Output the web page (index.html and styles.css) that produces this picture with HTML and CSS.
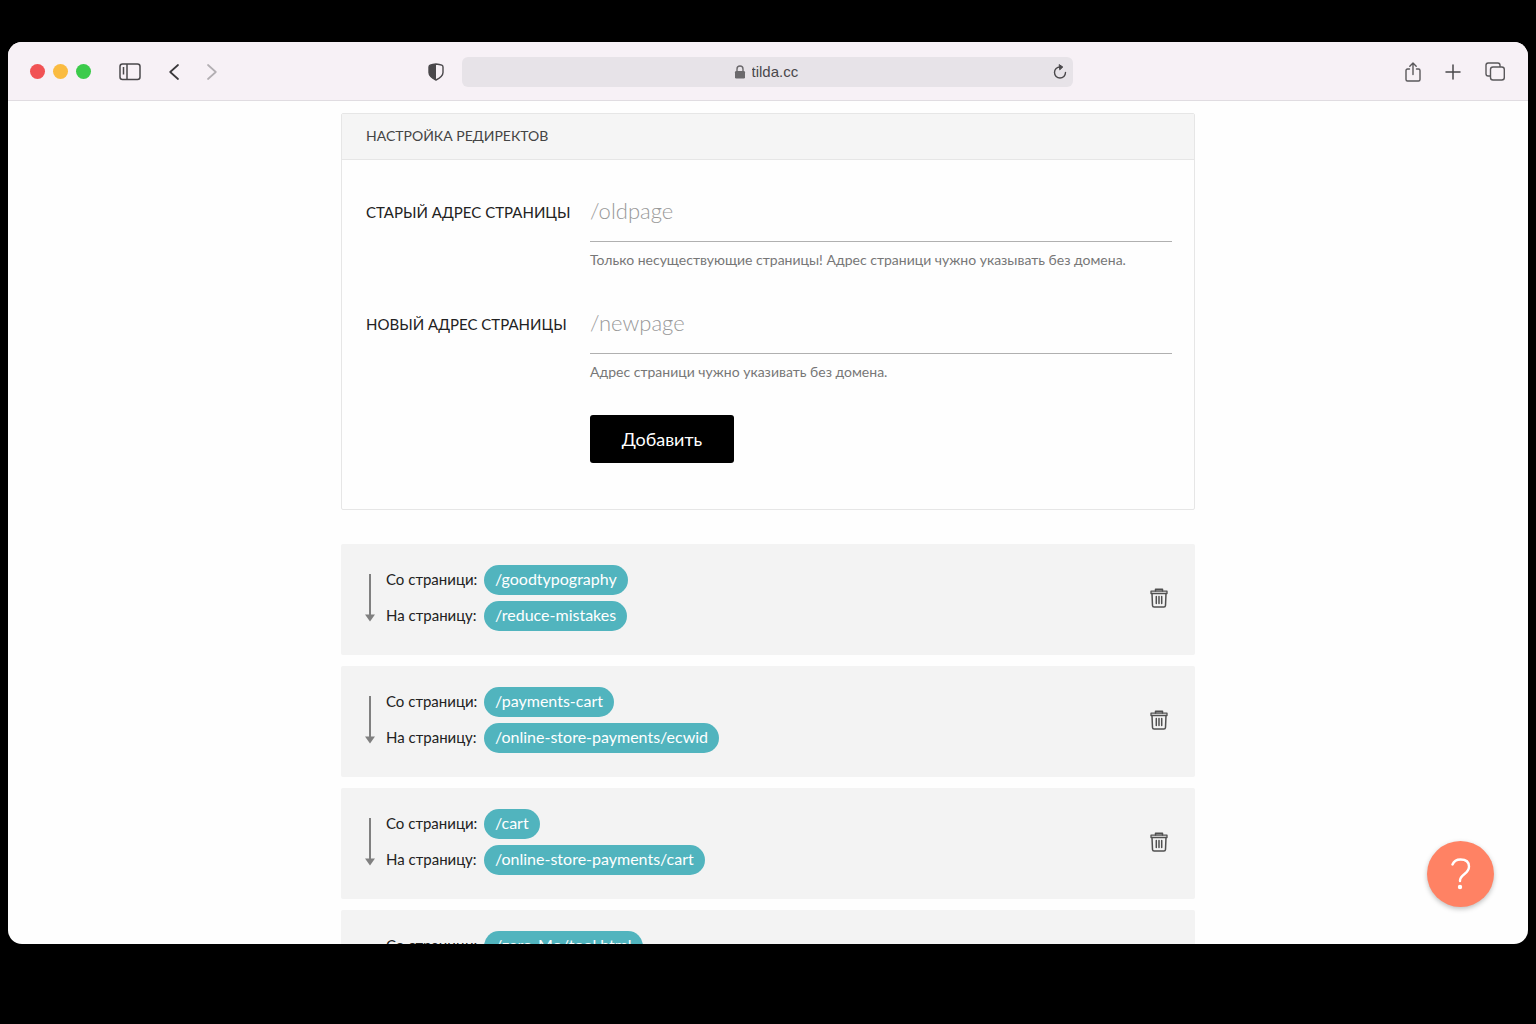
FILE: index.html
```html
<!DOCTYPE html>
<html lang="ru">
<head>
  <meta charset="UTF-8">
  <meta name="viewport" content="width=device-width, initial-scale=1.0">
  <title>Настройка редиректов</title>
  <link rel="stylesheet" href="styles.css">
</head>
<body>
  <svg class="sprite" width="0" height="0">
    <symbol id="icon-arrow" viewBox="0 0 10 48">
      <path d="M5 0V42" fill="none" stroke="#808080" stroke-width="2"/>
      <path d="M0 40.500H10L5 47.500Z" fill="#808080"/>
    </symbol>
    <symbol id="icon-trash" viewBox="0 0 18 20">
      <g fill="none" stroke="#505050" stroke-width="1.500" stroke-linejoin="round" stroke-linecap="round">
        <path d="M5.500 3V1.200H12.500V3" fill="#aaa"/>
        <path d="M1 3.200H17V5.500H1Z" stroke-width="1.300"/>
        <path d="M2 5.500L2.500 17.500Q2.600 19 4.100 19H13.900Q15.400 19 15.500 17.500L16 5.500"/>
        <path d="M6.300 8.500V15.500M9 8.500V15.500M11.700 8.500V15.500"/>
      </g>
    </symbol>
  </svg>

  <div class="window">
    <header class="toolbar">
      <div class="toolbar-left">
        <div class="dots">
          <span class="dot dot-red"></span>
          <span class="dot dot-yellow"></span>
          <span class="dot dot-green"></span>
        </div>
        <button class="tool" aria-label="Боковая панель">
          <svg width="22" height="18" viewBox="0 0 22 18" fill="none" stroke="#4a484b" stroke-width="1.500">
            <rect x="1" y="1" width="20" height="15.500" rx="2.500"/>
            <path d="M8 1V16.500M4.500 4V11.500"/>
          </svg>
        </button>
        <div class="nav">
          <button class="tool" aria-label="Назад">
            <svg width="10" height="16" viewBox="0 0 10 16" fill="none" stroke="#3a383b" stroke-width="1.700" stroke-linecap="round" stroke-linejoin="round"><path d="M9 1L1.200 8L9 15"/></svg>
          </button>
          <button class="tool" aria-label="Вперёд">
            <svg width="10" height="16" viewBox="0 0 10 16" fill="none" stroke="#b3afb3" stroke-width="1.700" stroke-linecap="round" stroke-linejoin="round"><path d="M1 1L8.800 8L1 15"/></svg>
          </button>
        </div>
        <button class="tool shield" aria-label="Конфиденциальность">
          <svg width="16" height="18" viewBox="0 0 16 18">
            <path d="M8 1Q4.500 1.200 2.200 2.200Q1 2.800 1 4V9.500Q1 13.500 8 17Q15 13.500 15 9.500V4Q15 2.800 13.800 2.200Q11.500 1.200 8 1Z" fill="none" stroke="#4a484b" stroke-width="1.400"/>
            <path d="M8 1Q4.500 1.200 2.200 2.200Q1 2.800 1 4V9.500Q1 13.500 8 17Z" fill="#4a484b"/>
          </svg>
        </button>
      </div>

      <div class="address">
        <svg class="lock" width="12" height="14" viewBox="0 0 12 14">
          <rect x="1" y="6" width="10" height="7.500" rx="1.200" fill="#6b696c"/>
          <path d="M3 6.500V4Q3 1 6 1T9 4V6.500" fill="none" stroke="#6b696c" stroke-width="1.400"/>
        </svg>
        <input class="address-input" type="text" value="tilda.cc" aria-label="Адрес сайта">
        <button class="tool reload" aria-label="Обновить">
          <svg width="14" height="15" viewBox="0 0 14 15" fill="none" stroke="#4a484b" stroke-width="1.400" stroke-linecap="round">
            <path d="M8 3H7A5.500 5.500 0 1 0 12.500 8.500"/>
            <path d="M6.500 0.800L9.800 3L7 5.600Z" fill="#4a484b" stroke-width="1"/>
          </svg>
        </button>
      </div>

      <div class="toolbar-right">
        <button class="tool" aria-label="Поделиться">
          <svg width="16" height="20" viewBox="0 0 16 20" fill="none" stroke="#5a585b" stroke-width="1.400" stroke-linecap="round" stroke-linejoin="round">
            <path d="M4.500 7H2.500Q1 7 1 8.500V17.500Q1 19 2.500 19H13.500Q15 19 15 17.500V8.500Q15 7 13.500 7H11.500"/>
            <path d="M8 12.500V1M4.800 4.200L8 1L11.200 4.200"/>
          </svg>
        </button>
        <button class="tool" aria-label="Новая вкладка">
          <svg width="16" height="16" viewBox="0 0 16 16" fill="none" stroke="#4a484b" stroke-width="1.500" stroke-linecap="round"><path d="M8 1V15M1 8H15"/></svg>
        </button>
        <button class="tool" aria-label="Все вкладки">
          <svg width="20" height="19" viewBox="0 0 20 19" fill="none" stroke="#5a585b" stroke-width="1.400">
            <rect x="5.500" y="5" width="13.800" height="13" rx="2.500"/>
            <path d="M5.500 14H3.200Q1 14 1 11.800V3.200Q1 1 3.200 1H12.800Q15 1 15 3.200V5"/>
          </svg>
        </button>
      </div>
    </header>

    <main class="page">
      <section class="panel">
        <h1 class="panel-title">НАСТРОЙКА РЕДИРЕКТОВ</h1>
        <form class="form">
          <div class="row">
            <label class="row-label" for="old-page">СТАРЫЙ АДРЕС СТРАНИЦЫ</label>
            <div class="field">
              <input class="field-input" id="old-page" type="text" placeholder="/oldpage">
              <p class="hint">Только несуществующие страницы! Адрес страници чужно указывать без домена.</p>
            </div>
          </div>
          <div class="row">
            <label class="row-label" for="new-page">НОВЫЙ АДРЕС СТРАНИЦЫ</label>
            <div class="field">
              <input class="field-input" id="new-page" type="text" placeholder="/newpage">
              <p class="hint">Адрес страници чужно указивать без домена.</p>
            </div>
          </div>
          <button class="submit" type="button">Добавить</button>
        </form>
      </section>

      <ul class="redirects">
        <li class="redirect">
          <svg class="arrow" width="10" height="48"><use href="#icon-arrow"/></svg>
          <div class="paths">
            <span>Со страници:</span><a class="pill" href="#">/goodtypography</a>
            <span>На страницу:</span><a class="pill" href="#">/reduce-mistakes</a>
          </div>
          <button class="tool" aria-label="Удалить"><svg width="18" height="20"><use href="#icon-trash"/></svg></button>
        </li>
        <li class="redirect">
          <svg class="arrow" width="10" height="48"><use href="#icon-arrow"/></svg>
          <div class="paths">
            <span>Со страници:</span><a class="pill" href="#">/payments-cart</a>
            <span>На страницу:</span><a class="pill" href="#">/online-store-payments/ecwid</a>
          </div>
          <button class="tool" aria-label="Удалить"><svg width="18" height="20"><use href="#icon-trash"/></svg></button>
        </li>
        <li class="redirect">
          <svg class="arrow" width="10" height="48"><use href="#icon-arrow"/></svg>
          <div class="paths">
            <span>Со страници:</span><a class="pill" href="#">/cart</a>
            <span>На страницу:</span><a class="pill" href="#">/online-store-payments/cart</a>
          </div>
          <button class="tool" aria-label="Удалить"><svg width="18" height="20"><use href="#icon-trash"/></svg></button>
        </li>
        <li class="redirect">
          <div class="arrow"></div>
          <div class="paths">
            <span>Со страници:</span><a class="pill" href="#">/zero-Mo/tool.html</a>
          </div>
        </li>
      </ul>
    </main>

    <button class="help" aria-label="Помощь">
      <svg width="20" height="32" viewBox="0 0 20 32" fill="none" stroke="#fff" stroke-width="2.400" stroke-linecap="round">
        <path d="M1.500 6.500Q3.500 1.500 9.500 1.500Q18 1.500 18 8.500Q18 12.500 13.500 16Q9 19.500 9 22.500V23"/>
        <circle cx="9" cy="29" r="2.200" fill="#fff" stroke="none"/>
      </svg>
    </button>
  </div>
</body>
</html>
```

FILE: styles.css
```css
* {
  margin: 0;
  padding: 0;
  box-sizing: border-box;
}
body {
  height: 100vh;
  padding: 42px 8px 80px;
  background: #000;
  color: #222;
  font-family: Lato, 'Open Sans', sans-serif;
  font-size: 16px;
}
.sprite {
  position: absolute;
}
button {
  border: none;
  font-family: inherit;
  cursor: pointer;
}
.window {
  position: relative;
  display: flex;
  flex-direction: column;
  height: 100%;
  background: #fefefe;
  border-radius: 14px;
  overflow: hidden;
}

/* Browser toolbar */
.toolbar {
  flex: none;
  display: grid;
  grid-template-columns: 1fr minmax(0, 611px) 1fr;
  align-items: center;
  height: 59px;
  padding: 1px 23px 0 22px;
  background: #f7f1f6;
  border-bottom: 1px solid #e0dce1;
}
.toolbar-left,
.toolbar-right,
.dots,
.nav {
  display: flex;
  align-items: center;
}
.toolbar-left {
  gap: 28px;
}
.toolbar-right {
  justify-content: flex-end;
  gap: 24px;
}
.dots {
  gap: 8px;
}
.nav {
  gap: 28px;
}
.dot {
  width: 15px;
  height: 15px;
  border-radius: 50%;
}
.dot-red {
  background: #f15254;
}
.dot-yellow {
  background: #fabb41;
}
.dot-green {
  background: #3ccb4b;
}
.tool {
  display: flex;
  background: none;
}
.shield {
  margin-left: auto;
  margin-right: 18px;
}
.address {
  display: grid;
  grid-template-columns: 1fr 54px 1fr;
  align-items: center;
  gap: 6px;
  height: 30px;
  padding: 0 6px 0 28px;
  background: #e7e3e8;
  border-radius: 6px;
}
.lock {
  justify-self: end;
}
.address-input {
  width: 100%;
  border: none;
  background: none;
  color: #4a484b;
  font-family: 'Liberation Sans', sans-serif;
  font-size: 15px;
}
.reload {
  justify-self: end;
}

/* Redirect form */
.page {
  width: 100%;
  max-width: 854px;
  margin: 12px auto 0;
}
.panel {
  border: 1px solid #e6e6e6;
  border-radius: 2px;
}
.panel-title {
  padding: 0 24px 2px;
  background: #f5f5f5;
  border-bottom: 1px solid #e6e6e6;
  color: #444;
  font-size: 14px;
  font-weight: 400;
  line-height: 43px;
}
.form {
  padding: 22px 22px 46px 24px;
}
.row {
  display: grid;
  grid-template-columns: 200px 1fr;
  gap: 24px;
  margin-bottom: 24px;
}
.row-label {
  font-size: 15px;
  line-height: 60px;
  white-space: nowrap;
}
.field-input {
  display: block;
  width: 100%;
  height: 60px;
  padding-bottom: 3px;
  border: none;
  border-bottom: 1px solid #b0b0b0;
  background: none;
  color: #222;
  font-family: inherit;
  font-size: 22px;
  font-weight: 300;
  outline: none;
}
.field-input::placeholder {
  color: #999;
}
.hint {
  margin-top: 8px;
  color: #777;
  font-size: 14px;
  line-height: 20px;
}
.submit {
  display: block;
  width: 144px;
  height: 48px;
  margin-top: 33px;
  margin-left: 224px;
  background: #000;
  border-radius: 3px;
  color: #fff;
  font-size: 18px;
}

/* Redirect list */
.redirects {
  display: grid;
  gap: 11px;
  margin-top: 34px;
  list-style: none;
}
.redirect {
  display: flex;
  align-items: center;
  height: 111px;
  padding: 0 27px 3px 24px;
  background: #f3f3f3;
  border-radius: 2px;
}
.arrow {
  flex: none;
  width: 10px;
  margin-right: 11px;
}
.paths {
  flex: 1;
  align-self: start;
  display: grid;
  grid-template-columns: 92px 1fr;
  align-items: start;
  justify-items: start;
  gap: 6px;
  padding-top: 21px;
  font-size: 15px;
  line-height: 28px;
  white-space: nowrap;
}
.pill {
  height: 30px;
  padding: 0 11px;
  background: #51b4be;
  border-radius: 15px;
  color: #fff;
  font-size: 16px;
  text-decoration: none;
}
.help {
  position: absolute;
  right: 34px;
  bottom: 37px;
  display: flex;
  align-items: center;
  justify-content: center;
  width: 67px;
  height: 66px;
  background: #ff8264;
  border-radius: 50%;
  box-shadow: 0 2px 5px rgba(0, 0, 0, 0.25);
}
```
